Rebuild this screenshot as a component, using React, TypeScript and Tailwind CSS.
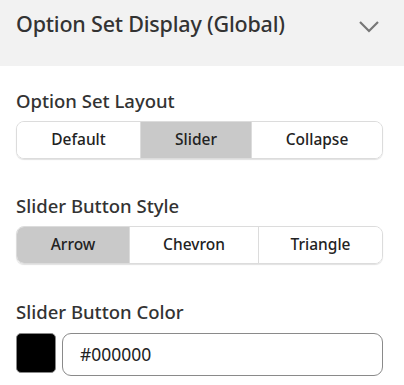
import React from 'react';

function Segmented({ options, active, widths }: { options: string[]; active: number; widths: string[] }) {
  return (
    <div className="flex h-[38px] w-[367px] overflow-hidden rounded-lg border border-[#dcdcdc] shadow-[0_1px_1px_rgba(0,0,0,0.12)]">
      {options.map((o, i) => (
        <div
          key={o}
          className={
            'flex items-center justify-center text-[15.5px] font-medium text-[#222] ' +
            widths[i] +
            (i > 0 ? ' border-l border-[#dcdcdc]' : '') +
            (i === active ? ' bg-[#c9c9c9]' : ' bg-white')
          }
        >
          {o}
        </div>
      ))}
    </div>
  );
}

export default function App() {
  return (
    <div className="w-[404px] h-[385px] bg-white font-['Noto_Sans',sans-serif] text-[#333]">
      <div className="h-[66px] bg-[#f2f2f2] flex items-start justify-between pl-4 pr-6 pt-[9px]">
        <h2 className="text-[21.5px] leading-[30px] font-medium text-[#333] tracking-[-0.2px]">Option Set Display (Global)</h2>
        <svg width="22" height="14" viewBox="0 0 22 14" className="mt-[11px]">
          <path d="M2 2 L11 11 L20 2" fill="none" stroke="#777" strokeWidth="2.2" />
        </svg>
      </div>
      <div className="px-4 pt-[22px]">
        <div className="text-[18.5px] leading-[25px] font-medium text-[#333] mb-[8px]">Option Set Layout</div>
        <Segmented options={['Default', 'Slider', 'Collapse']} active={1} widths={['w-[123px]', 'w-[111px]', 'flex-1']} />
        <div className="text-[18.5px] leading-[25px] font-medium text-[#333] mt-[34px] mb-[8px]">Slider Button Style</div>
        <Segmented options={['Arrow', 'Chevron', 'Triangle']} active={0} widths={['w-[112px]', 'w-[129px]', 'flex-1']} />
        <div className="text-[18.5px] leading-[25px] font-medium text-[#333] mt-[35px] mb-[9px]">Slider Button Color</div>
        <div className="flex w-[367px] items-start gap-[6px]">
          <div className="w-[40px] h-[40px] rounded-[5px] bg-black border border-[#888]" />
          <div className="flex-1 h-[43px] rounded-[9px] border border-[#8a8a8a] flex items-center pl-[17px] text-[17.5px] text-[#222]">
            #000000
          </div>
        </div>
      </div>
    </div>
  );
}
